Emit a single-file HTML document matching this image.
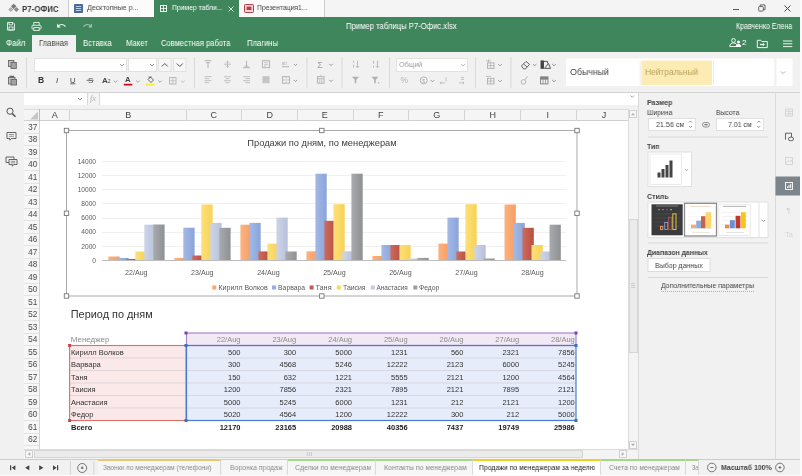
<!DOCTYPE html>
<html lang="ru"><head><meta charset="utf-8"><title>Пример таблицы Р7-Офис.xlsx</title>
<style>
*{box-sizing:border-box;margin:0;padding:0}
html,body{width:802px;height:476px;overflow:hidden;background:#f1f1f1}
body{font-family:"Liberation Sans",sans-serif;font-size:8px;color:#444;position:relative}
.a{position:absolute}
.t{position:absolute;white-space:nowrap;line-height:1;transform-origin:0 0;will-change:transform}
svg{position:absolute;overflow:visible;will-change:transform}
.w{color:#fff}
.gs{-webkit-text-stroke:0.2px #fff}
.b{font-weight:bold}
.box{position:absolute;background:#fff;border:1px solid #cfcfcf}
.sep{position:absolute;width:1px;background:#d8d8d8}
.hl{position:absolute;height:1px;background:#d8d8d8}
.ic{stroke:#b4b4b4;fill:none;stroke-width:1}
.dk{stroke:#555;fill:none;stroke-width:1}
</style></head><body>
<div class="a" style="left:0;top:0;width:802px;height:17px;background:#f4f4f4"></div><svg style="left:8px;top:3px" width="12" height="11" viewBox="0 0 12 11">
<path d="M5.700 0.700 L8.500 3.300 L5.700 5.900 L2.900 3.300Z" fill="#7a7a7a"/>
<path d="M2.800 3.900 L5.400 6.400 L2.800 8.900 L0.200 6.400Z" fill="#aeaeae"/>
<path d="M8.400 3.900 L11 6.400 L8.400 8.900 L5.800 6.400Z" fill="#8c8c8c"/>
</svg><div class="t" style="left:21.65px;top:3.66px;font-size:9.5px;color:#3a3a3a;font-weight:bold;transform:scaleX(0.835);">Р7-ОФИС</div><div class="a" style="left:68px;top:0;width:1px;height:17px;background:#cfcfcf"></div><div class="a" style="left:69px;top:0;width:85px;height:17px;background:#fbfbfb"></div><svg style="left:74px;top:4px" width="9" height="9" viewBox="0 0 9 9"><rect width="9" height="9" rx="0.8" fill="#446a9e"/>
<path d="M1.8 2.5h5.4M1.8 4.5h5.4M1.8 6.5h5.4" stroke="#cfd9ea" stroke-width="0.9"/></svg><div class="t" style="left:86.65px;top:4.46px;font-size:8px;color:#444;transform:scaleX(0.890);">Десктопные р...</div><div class="a" style="left:154px;top:0;width:85px;height:18px;background:#40865c"></div><svg style="left:160px;top:5px" width="7" height="7" viewBox="0 0 7 7"><rect x="0.5" y="0.5" width="6" height="6" fill="none" stroke="#fff" stroke-width="0.9"/>
<path d="M0.5 3.5h6M3.5 0.5v6" stroke="#fff" stroke-width="0.8"/></svg><div class="t" style="left:171.65px;top:4.46px;font-size:8px;color:#fff;transform:scaleX(0.851);">Пример табли...</div><svg style="left:228px;top:6px" width="6" height="6" viewBox="0 0 6 6"><path d="M0.5 0.5l5 5M5.5 0.5l-5 5" stroke="#e8f0ea" stroke-width="0.9"/></svg><div class="a" style="left:239px;top:0;width:85px;height:17px;background:#fbfbfb"></div><svg style="left:244px;top:4px" width="10" height="9" viewBox="0 0 10 9"><rect x="0.5" y="0.5" width="9" height="8" rx="0.8" fill="#f3d6d6" stroke="#b5404a" stroke-width="1"/>
<rect x="2.6" y="2.6" width="4.8" height="3.4" fill="#b5404a"/></svg><div class="t" style="left:257.45px;top:4.46px;font-size:8px;color:#444;transform:scaleX(0.850);">Презентация1...</div><div class="a" style="left:324px;top:0;width:1px;height:17px;background:#cfcfcf"></div><svg style="left:730px;top:0" width="72" height="17" viewBox="0 0 72 17">
<path d="M3 9.500h6" stroke="#555" stroke-width="1"/>
<rect x="28.700" y="6.500" width="4.600" height="4.600" rx="0.800" fill="none" stroke="#555" stroke-width="0.9"/><path d="M30.200 6.500v-1.600h4.800v4.800h-1.600" fill="none" stroke="#555" stroke-width="0.9"/>
<path d="M54.5 5.5l6 6M60.5 5.5l-6 6" stroke="#444" stroke-width="1"/>
</svg><div class="a" style="left:0;top:17px;width:802px;height:35px;background:#40865c"></div><svg style="left:0;top:17px" width="110" height="18" viewBox="0 0 110 18">
<g fill="none" stroke="#e9f2ec" stroke-width="0.9">
<path d="M7.5 5.5h5.5l1.5 1.5v6h-7z"/><path d="M9 5.5v2.3h3.5v-2.3"/><rect x="9" y="10" width="4" height="3"/>
<rect x="32" y="8.300" width="9" height="3.800" rx="0.8"/><path d="M33.800 8.300v-2.800h5.400v2.800"/><rect x="33.800" y="10.600" width="5.400" height="2.800" fill="#40865c"/>
</g>
<path d="M58 9.2c2-2.300 5-2.300 7.500 0.300" fill="none" stroke="#e9f2ec" stroke-width="1.1"/><path d="M57 6.600v3.800h3.800z" fill="#e9f2ec"/>
<path d="M91 9.200c-2-2.300-5-2.300-7.500 0.300" fill="none" stroke="#9fc3ad" stroke-width="1.100"/><path d="M92 6.600v3.800h-3.800z" fill="#9fc3ad"/>
</svg><div class="t" style="left:345.65px;top:21.89px;font-size:8.7px;color:#fff;transform:scaleX(0.886);">Пример таблицы Р7-Офис.xlsx</div><div class="t" style="left:736.05px;top:22.00px;font-size:8.5px;color:#fff;transform:scaleX(0.827);">Кравченко Елена</div><div class="a" style="left:32px;top:35px;width:44px;height:17px;background:#f1f1f1"></div><div class="t" style="left:5.65px;top:39.20px;font-size:8.3px;color:#fff;transform:scaleX(0.956);">Файл</div><div class="t" style="left:39.35px;top:39.20px;font-size:8.3px;color:#444;transform:scaleX(0.921);">Главная</div><div class="t" style="left:83.15px;top:39.20px;font-size:8.3px;color:#fff;transform:scaleX(0.930);">Вставка</div><div class="t" style="left:126.05px;top:39.20px;font-size:8.3px;color:#fff;transform:scaleX(0.932);">Макет</div><div class="t" style="left:160.95px;top:39.20px;font-size:8.3px;color:#fff;transform:scaleX(0.914);">Совместная работа</div><div class="t" style="left:247.05px;top:39.20px;font-size:8.3px;color:#fff;transform:scaleX(0.925);">Плагины</div><svg style="left:726px;top:36px" width="76" height="14" viewBox="0 0 76 14">
<g fill="none" stroke="#fff" stroke-width="0.9">
<circle cx="7.500" cy="4.400" r="1.900"/><path d="M3.800 10.500c0-2.600 1.500-3.500 3.700-3.500s3.700 0.900 3.700 3.500z"/>
</g>
<circle cx="12.500" cy="6" r="1.500" fill="#fff"/><path d="M9.900 10.900c0-2.200 1.100-3 2.600-3s2.600 0.800 2.600 3z" fill="#fff"/>
<g fill="none" stroke="#fff" stroke-width="0.900">
<path d="M31.300 4.300h3.500l1 1.200h5.500v6.100h-10z"/>
<path d="M57 5h9.300M57 7.800h9.300M57 10.600h9.300"/>
</g>
<path d="M34 8.500h3.400" fill="none" stroke="#fff" stroke-width="1.200"/><path d="M36.800 6.700l2 1.800l-2 1.800z" fill="#fff"/>
</svg><div class="t" style="left:741.75px;top:39.07px;font-size:7.6px;color:#fff;transform:scaleX(1.088);">2</div><div class="a" style="left:0;top:52px;width:802px;height:40px;background:#f1f1f1"></div><div class="hl" style="left:0;top:92px;width:802px;background:#d2d2d2"></div><svg style="left:0;top:52px" width="802" height="40" viewBox="0 52 802 40"><g fill="none" stroke="#666" stroke-width="0.9"><rect x="8.500" y="60.500" width="5.300" height="6" fill="#c8c8c8"/><rect x="11" y="62.500" width="5.300" height="6" fill="#a4a4a4"/></g><g fill="none" stroke="#666" stroke-width="0.9"><rect x="8.500" y="77.500" width="6.500" height="6.500" fill="#c8c8c8"/><rect x="11" y="79.500" width="5.500" height="5.500" fill="#a4a4a4"/><path d="M10 77.500v-1h3.500v1" stroke-width="1.300"/></g><path d="M26.5 57v31" stroke="#d9d9d9" stroke-width="1"/><path d="M194.5 57v31" stroke="#d9d9d9" stroke-width="1"/><path d="M307 57v31" stroke="#d9d9d9" stroke-width="1"/><path d="M342 57v31" stroke="#d9d9d9" stroke-width="1"/><path d="M389.5 57v31" stroke="#d9d9d9" stroke-width="1"/><path d="M475.5 57v31" stroke="#d9d9d9" stroke-width="1"/><path d="M511 57v31" stroke="#d9d9d9" stroke-width="1"/><rect x="34.500" y="58.500" width="92" height="13" fill="#fff" stroke="#e2e2e2"/><path d="M120.0 64.0l2.0 2.0l2.0 -2.0" fill="none" stroke="#909090" stroke-width="0.9"/><rect x="128.500" y="58.500" width="28" height="13" fill="#fff" stroke="#e2e2e2"/><path d="M150.0 64.0l2.0 2.0l2.0 -2.0" fill="none" stroke="#909090" stroke-width="0.9"/><rect x="158.500" y="58.500" width="12.500" height="13" fill="#f7f7f7" stroke="#e2e2e2"/><path d="M161.800 66.500l3 -3l3 3" fill="none" stroke="#555" stroke-width="1"/><rect x="173.500" y="58.500" width="12.500" height="13" fill="#f7f7f7" stroke="#e2e2e2"/><path d="M176.800 63.500l3 3l3 -3" fill="none" stroke="#555" stroke-width="1"/><path d="M70.300 83.800h5" stroke="#444" stroke-width="0.8"/><path d="M86.500 80.300h7" stroke="#555" stroke-width="0.8"/><path d="M113.7 80.6l1.8 1.8l1.8 -1.8" fill="none" stroke="#999" stroke-width="0.9"/><rect x="123.800" y="83.800" width="8.500" height="1.700" fill="#d0021b"/><path d="M136.2 80.6l1.8 1.8l1.8 -1.8" fill="none" stroke="#999" stroke-width="0.9"/><rect x="146" y="83.800" width="8.500" height="1.700" fill="#f3ec3a"/><g fill="none" stroke="#555" stroke-width="0.9"><path d="M148 79.500l2.500 -2.500l3 3l-2.500 2.500z"/><path d="M148.500 77h3"/></g><path d="M158.2 80.6l1.8 1.8l1.8 -1.8" fill="none" stroke="#999" stroke-width="0.9"/><g fill="none" stroke="#b4b4b4" stroke-width="0.9"><rect x="169.500" y="77.500" width="6.500" height="6.500"/><path d="M172.800 77.500v6.500M169.500 80.800h6.500" stroke-width="0.7"/></g><path d="M181.2 80.6l1.8 1.8l1.8 -1.8" fill="none" stroke="#b4b4b4" stroke-width="0.9"/><g transform="translate(0,-0.8)"><g fill="none" stroke="#b4b4b4" stroke-width="1"><path d="M204.500 61.500h7M208 63v6M206 63.500h4"/></g><g fill="none" stroke="#b4b4b4" stroke-width="1"><path d="M224 65h7M227.500 61.500v7M226 63.500l1.500 -1.500l1.500 1.500M226 66.500l1.500 1.500l1.500 -1.500" stroke-width="0.8"/></g><g fill="none" stroke="#b4b4b4" stroke-width="1"><path d="M243 68.500h7M246.500 61.500v6M244.500 67h4"/></g><g fill="none" stroke="#b4b4b4" stroke-width="1"><rect x="262.500" y="61.500" width="7" height="7"/><path d="M264 63.500h4M264 65.500h4M264 67h2" stroke-width="0.7"/></g><g fill="none" stroke="#b4b4b4" stroke-width="1"><path d="M282 67.500h7"/></g><text x="281.500" y="65.500" font-size="5" fill="#b4b4b4" font-family="Liberation Sans, sans-serif">ab</text><path d="M293.8 64.7l1.7 1.7l1.7 -1.7" fill="none" stroke="#909090" stroke-width="0.9"/><g fill="none" stroke="#b4b4b4" stroke-width="1"><path d="M204.500 77.500h7M204.500 79.500h4.500M204.500 81.500h7M204.500 83.500h4.500" stroke-width="0.8"/></g><g fill="none" stroke="#b4b4b4" stroke-width="1"><path d="M224 77.500h7M225.500 79.500h4M224 81.500h7M225.500 83.500h4" stroke-width="0.8"/></g><g fill="none" stroke="#b4b4b4" stroke-width="1"><path d="M243 77.500h7M245.500 79.500h4.500M243 81.500h7M245.500 83.500h4.500" stroke-width="0.8"/></g><rect x="262.500" y="77" width="7" height="7" fill="#c4c4c4"/><g fill="none" stroke="#b4b4b4" stroke-width="1"><rect x="282.500" y="77.500" width="7" height="6.500"/><path d="M282.500 80.800h7M286 77.500v1.500M286 82.500v1.500" stroke-width="0.700"/></g><path d="M293.8 80.7l1.7 1.7l1.7 -1.7" fill="none" stroke="#909090" stroke-width="0.9"/><text x="317.300" y="68.500" font-size="8.800" fill="#a0a0a0" font-family="Liberation Sans, sans-serif">Σ</text><path d="M329.3 64.7l1.7 1.7l1.7 -1.7" fill="none" stroke="#909090" stroke-width="0.9"/><g fill="none" stroke="#b4b4b4" stroke-width="1"><rect x="317.500" y="77.500" width="6.500" height="6.500"/><path d="M317.500 79.500h6.500M319.700 79.500v4.500M321.800 79.500v4.500M320.800 75.500v2" stroke-width="0.700"/></g><path d="M329.3 80.7l1.7 1.7l1.7 -1.7" fill="none" stroke="#909090" stroke-width="0.9"/><g fill="none" stroke="#b4b4b4" stroke-width="1"><path d="M353.500 61.500v2M353.500 65.500v3M357.500 61.500v7M356 67l1.500 1.500l1.500 -1.500" stroke-width="0.900"/></g><g fill="none" stroke="#b4b4b4" stroke-width="1"><path d="M373.500 61.500v3M373.500 66.500v2M377.500 61.500v7M376 67l1.500 1.500l1.500 -1.500" stroke-width="0.9"/></g><path d="M352 77.500h7l-2.700 3v3.500h-1.600v-3.500z" fill="#b0b0b0"/><path d="M371.500 77.500h7l-2.700 3v3.500h-1.600v-3.500z" fill="#b0b0b0"/><rect x="378" y="83" width="1.300" height="1.300" fill="#b0b0b0"/></g><rect x="396.500" y="58.500" width="71" height="13" fill="#fff" stroke="#e2e2e2"/><path d="M461.0 64.0l2.0 2.0l2.0 -2.0" fill="none" stroke="#b4b4b4" stroke-width="0.9"/><g transform="translate(0,-0.6)"><text x="400.500" y="84" font-size="8.500" fill="#b4b4b4" font-family="Liberation Sans, sans-serif">%</text><g fill="none" stroke="#b4b4b4" stroke-width="1"><circle cx="423.700" cy="81" r="3.500"/></g><text x="422" y="83.300" font-size="6" fill="#b4b4b4" font-family="Liberation Sans, sans-serif">$</text><path d="M430.8 80.7l1.7 1.7l1.7 -1.7" fill="none" stroke="#909090" stroke-width="0.9"/><g fill="none" stroke="#b4b4b4" stroke-width="1"><path d="M440 83.500h5M440 83.500l1.300 -1.300M440 83.500l1.300 1.300M446 78v4" stroke-width="0.800"/></g><g fill="none" stroke="#b4b4b4" stroke-width="1"><path d="M459 83.500h5M464 83.500l-1.300 -1.300M464 83.500l-1.300 1.300M461 78h3M461 80h3" stroke-width="0.8"/></g><g fill="none" stroke="#b4b4b4" stroke-width="1"><rect x="487.500" y="63.500" width="6.500" height="5.500"/><path d="M487.500 66.200h6.500M490.700 63.500v5.500M486 61.500h5M488.500 60v3" stroke-width="0.800"/></g><path d="M498.3 64.7l1.7 1.7l1.7 -1.7" fill="none" stroke="#909090" stroke-width="0.9"/><g fill="none" stroke="#b4b4b4" stroke-width="1"><rect x="487.500" y="79" width="6.500" height="5.500"/><path d="M487.500 81.700h6.500M490.700 79v5.500M486 77h5" stroke-width="0.800"/></g><path d="M498.3 80.7l1.7 1.7l1.7 -1.7" fill="none" stroke="#909090" stroke-width="0.9"/><g fill="none" stroke="#555" stroke-width="0.9"><path d="M521.500 66.500l4.500 -4.500l3.500 3l-4 4.500h-2z"/><path d="M523.500 64.500l3.500 3"/></g><path d="M532.9 64.6l1.8 1.8l1.8 -1.8" fill="none" stroke="#888" stroke-width="0.9"/><g stroke="#444" stroke-width="0.9"><rect x="541" y="61.500" width="2.500" height="7.500" fill="#444"/><path d="M544.500 69l4 -5l2 5z" fill="none"/><path d="M544 62h3.500v2" fill="none"/></g><path d="M552.2 64.6l1.8 1.8l1.8 -1.8" fill="none" stroke="#888" stroke-width="0.9"/><g fill="none" stroke="#b4b4b4" stroke-width="1"><circle cx="523.500" cy="82.500" r="2.300"/><path d="M525 80.500l2.500 -3.500"/></g><g fill="none" stroke="#808080" stroke-width="0.9"><rect x="540.500" y="77.500" width="7.500" height="7"/><path d="M540.500 79.800h7.500M543 79.800v4.700M545.500 79.800v4.700" stroke-width="0.700"/></g><rect x="540.500" y="77.500" width="7.500" height="2.300" fill="#808080"/><path d="M552.2 80.6l1.8 1.8l1.8 -1.8" fill="none" stroke="#888" stroke-width="0.9"/></g><rect x="566" y="58.500" width="226.500" height="27.500" fill="#fff"/><rect x="641.500" y="60.500" width="70.500" height="24.500" fill="#fcecb4"/><path d="M640.200 60.500v24.500M713.500 60.500v24.500" stroke="#ececec" stroke-width="1"/><rect x="774.300" y="58" width="2.200" height="28.500" fill="#f1f1f1"/><path d="M780.8 71.4l2.2 2.2l2.2 -2.2" fill="none" stroke="#aaa" stroke-width="0.9"/></svg><div class="t b" style="left:38.200px;top:76.300px;font-size:8.500px;color:#333">B</div><div class="t" style="left:55.500px;top:76.500px;font-size:8px;color:#444;font-style:italic">I</div><div class="t" style="left:70.300px;top:76.500px;font-size:7.500px;color:#444">U</div><div class="t" style="left:87.500px;top:76.500px;font-size:8px;color:#555">S</div><div class="t b" style="left:102px;top:76.500px;font-size:8px;color:#444">A<span style="font-size:5px;font-weight:normal">2</span></div><div class="t b" style="left:125.300px;top:76px;font-size:7.800px;color:#444">A</div><div class="t" style="left:399.15px;top:60.96px;font-size:8px;color:#9c9c9c;transform:scaleX(0.881);">Общий</div><div class="t" style="left:569.95px;top:67.73px;font-size:9px;color:#444;transform:scaleX(0.978);">Обычный</div><div class="t" style="left:644.65px;top:67.73px;font-size:9px;color:#b9a25f;transform:scaleX(0.932);">Нейтральный</div><div class="a" style="left:24px;top:93px;width:613.500px;height:12.500px;background:#fff"></div><div class="a" style="left:86.500px;top:93px;width:13px;height:12px;background:#f4f4f4;border-left:1px solid #d8d8d8;border-right:1px solid #d8d8d8"></div><div class="t" style="left:89.500px;top:94.500px;font-size:8px;color:#b0b0b0;font-style:italic;font-family:'Liberation Serif',serif">fx</div><svg style="left:76px;top:96px" width="8" height="6" viewBox="0 0 8 6"><path d="M2 2l2 2l2 -2" fill="none" stroke="#888" stroke-width="0.9"/></svg><svg style="left:628px;top:94px" width="8" height="6" viewBox="0 0 8 6"><path d="M2.500 1.500l1.800 1.800l1.800 -1.800" fill="none" stroke="#999" stroke-width="0.9"/></svg><div class="hl" style="left:24px;top:105.500px;width:613.500px;background:#dcdcdc"></div><svg style="left:0;top:93px" width="24" height="80" viewBox="0 93 24 80">
<g fill="none" stroke="#555" stroke-width="1">
<circle cx="10" cy="111.200" r="3.100"/><path d="M12.300 113.600l3.200 3.200" stroke-width="1.500"/>
<path d="M7 132.500h9v6h-4.500l-1.600 1.700v-1.700h-2.900z" stroke-width="0.900"/><path d="M9 134.500h5M9 136.300h5" stroke-width="0.600"/>
<path d="M6 157h8v5.500h-8z" stroke-width="0.900"/><path d="M9 159.500h8v5h-3l-1.600 1.600v-1.600h-3.400z" fill="#f1f1f1" stroke-width="0.900"/><path d="M10.800 161.300h4.400M10.800 162.800h4.400" stroke-width="0.600"/>
</g></svg><div class="a" style="left:24px;top:105px;width:613.500px;height:354px;background:#f1f1f1"></div><div class="a" style="left:40px;top:120.500px;width:588px;height:328.500px;background:#fff;overflow:hidden" id="grid"></div><div class="a" style="left:24px;top:108.500px;width:604px;height:12px;background:#f5f5f5;border-top:1px solid #dcdcdc;border-bottom:1px solid #cfcfcf"></div><svg style="left:24px;top:108.500px" width="16" height="12" viewBox="0 0 16 12"><path d="M14 2.500v8h-8z" fill="#c6c6c6"/><path d="M15.500 0v12" stroke="#b8c0a8" stroke-width="1"/></svg><div class="t" style="left:40.0px;top:110.500px;width:29.6px;text-align:center;font-size:9px;color:#444">A</div><div class="a" style="left:69.1px;top:109.500px;width:1px;height:11px;background:#d5d5d5"></div><div class="t" style="left:69.6px;top:110.500px;width:116.4px;text-align:center;font-size:9px;color:#444">B</div><div class="a" style="left:185.5px;top:109.500px;width:1px;height:11px;background:#d5d5d5"></div><div class="t" style="left:186.0px;top:110.500px;width:55.7px;text-align:center;font-size:9px;color:#444">C</div><div class="a" style="left:241.2px;top:109.500px;width:1px;height:11px;background:#d5d5d5"></div><div class="t" style="left:241.7px;top:110.500px;width:55.7px;text-align:center;font-size:9px;color:#444">D</div><div class="a" style="left:296.9px;top:109.500px;width:1px;height:11px;background:#d5d5d5"></div><div class="t" style="left:297.4px;top:110.500px;width:55.7px;text-align:center;font-size:9px;color:#444">E</div><div class="a" style="left:352.7px;top:109.500px;width:1px;height:11px;background:#d5d5d5"></div><div class="t" style="left:353.2px;top:110.500px;width:55.7px;text-align:center;font-size:9px;color:#444">F</div><div class="a" style="left:408.4px;top:109.500px;width:1px;height:11px;background:#d5d5d5"></div><div class="t" style="left:408.9px;top:110.500px;width:55.7px;text-align:center;font-size:9px;color:#444">G</div><div class="a" style="left:464.1px;top:109.500px;width:1px;height:11px;background:#d5d5d5"></div><div class="t" style="left:464.6px;top:110.500px;width:55.7px;text-align:center;font-size:9px;color:#444">H</div><div class="a" style="left:519.8px;top:109.500px;width:1px;height:11px;background:#d5d5d5"></div><div class="t" style="left:520.3px;top:110.500px;width:55.7px;text-align:center;font-size:9px;color:#444">I</div><div class="a" style="left:575.5px;top:109.500px;width:1px;height:11px;background:#d5d5d5"></div><div class="t" style="left:576.0px;top:110.500px;width:56.0px;text-align:center;font-size:9px;color:#444">J</div><div class="a" style="left:24px;top:120.500px;width:16px;height:328.500px;background:#f7f7f7;border-right:1px solid #d4d4d4;overflow:hidden"><div class="t" style="left:0.500px;top:2.4px;width:15.500px;text-align:center;font-size:8.500px;color:#444;transform:scaleX(.95);transform-origin:50% 0">37</div><div class="a" style="left:0;top:12.0px;width:16px;height:1px;background:#e3e3e3"></div><div class="t" style="left:0.500px;top:14.9px;width:15.500px;text-align:center;font-size:8.500px;color:#444;transform:scaleX(.95);transform-origin:50% 0">38</div><div class="a" style="left:0;top:24.5px;width:16px;height:1px;background:#e3e3e3"></div><div class="t" style="left:0.500px;top:27.4px;width:15.500px;text-align:center;font-size:8.500px;color:#444;transform:scaleX(.95);transform-origin:50% 0">39</div><div class="a" style="left:0;top:37.0px;width:16px;height:1px;background:#e3e3e3"></div><div class="t" style="left:0.500px;top:39.9px;width:15.500px;text-align:center;font-size:8.500px;color:#444;transform:scaleX(.95);transform-origin:50% 0">40</div><div class="a" style="left:0;top:49.5px;width:16px;height:1px;background:#e3e3e3"></div><div class="t" style="left:0.500px;top:52.4px;width:15.500px;text-align:center;font-size:8.500px;color:#444;transform:scaleX(.95);transform-origin:50% 0">41</div><div class="a" style="left:0;top:62.0px;width:16px;height:1px;background:#e3e3e3"></div><div class="t" style="left:0.500px;top:64.9px;width:15.500px;text-align:center;font-size:8.500px;color:#444;transform:scaleX(.95);transform-origin:50% 0">42</div><div class="a" style="left:0;top:74.5px;width:16px;height:1px;background:#e3e3e3"></div><div class="t" style="left:0.500px;top:77.4px;width:15.500px;text-align:center;font-size:8.500px;color:#444;transform:scaleX(.95);transform-origin:50% 0">43</div><div class="a" style="left:0;top:87.0px;width:16px;height:1px;background:#e3e3e3"></div><div class="t" style="left:0.500px;top:89.9px;width:15.500px;text-align:center;font-size:8.500px;color:#444;transform:scaleX(.95);transform-origin:50% 0">44</div><div class="a" style="left:0;top:99.5px;width:16px;height:1px;background:#e3e3e3"></div><div class="t" style="left:0.500px;top:102.4px;width:15.500px;text-align:center;font-size:8.500px;color:#444;transform:scaleX(.95);transform-origin:50% 0">45</div><div class="a" style="left:0;top:112.0px;width:16px;height:1px;background:#e3e3e3"></div><div class="t" style="left:0.500px;top:114.9px;width:15.500px;text-align:center;font-size:8.500px;color:#444;transform:scaleX(.95);transform-origin:50% 0">46</div><div class="a" style="left:0;top:124.5px;width:16px;height:1px;background:#e3e3e3"></div><div class="t" style="left:0.500px;top:127.4px;width:15.500px;text-align:center;font-size:8.500px;color:#444;transform:scaleX(.95);transform-origin:50% 0">47</div><div class="a" style="left:0;top:137.0px;width:16px;height:1px;background:#e3e3e3"></div><div class="t" style="left:0.500px;top:139.9px;width:15.500px;text-align:center;font-size:8.500px;color:#444;transform:scaleX(.95);transform-origin:50% 0">48</div><div class="a" style="left:0;top:149.5px;width:16px;height:1px;background:#e3e3e3"></div><div class="t" style="left:0.500px;top:152.4px;width:15.500px;text-align:center;font-size:8.500px;color:#444;transform:scaleX(.95);transform-origin:50% 0">49</div><div class="a" style="left:0;top:162.0px;width:16px;height:1px;background:#e3e3e3"></div><div class="t" style="left:0.500px;top:164.9px;width:15.500px;text-align:center;font-size:8.500px;color:#444;transform:scaleX(.95);transform-origin:50% 0">50</div><div class="a" style="left:0;top:174.5px;width:16px;height:1px;background:#e3e3e3"></div><div class="t" style="left:0.500px;top:177.4px;width:15.500px;text-align:center;font-size:8.500px;color:#444;transform:scaleX(.95);transform-origin:50% 0">51</div><div class="a" style="left:0;top:187.0px;width:16px;height:1px;background:#e3e3e3"></div><div class="t" style="left:0.500px;top:189.9px;width:15.500px;text-align:center;font-size:8.500px;color:#444;transform:scaleX(.95);transform-origin:50% 0">52</div><div class="a" style="left:0;top:199.5px;width:16px;height:1px;background:#e3e3e3"></div><div class="t" style="left:0.500px;top:202.4px;width:15.500px;text-align:center;font-size:8.500px;color:#444;transform:scaleX(.95);transform-origin:50% 0">53</div><div class="a" style="left:0;top:212.0px;width:16px;height:1px;background:#e3e3e3"></div><div class="t" style="left:0.500px;top:214.9px;width:15.500px;text-align:center;font-size:8.500px;color:#444;transform:scaleX(.95);transform-origin:50% 0">54</div><div class="a" style="left:0;top:224.5px;width:16px;height:1px;background:#e3e3e3"></div><div class="t" style="left:0.500px;top:227.4px;width:15.500px;text-align:center;font-size:8.500px;color:#444;transform:scaleX(.95);transform-origin:50% 0">55</div><div class="a" style="left:0;top:237.0px;width:16px;height:1px;background:#e3e3e3"></div><div class="t" style="left:0.500px;top:239.9px;width:15.500px;text-align:center;font-size:8.500px;color:#444;transform:scaleX(.95);transform-origin:50% 0">56</div><div class="a" style="left:0;top:249.5px;width:16px;height:1px;background:#e3e3e3"></div><div class="t" style="left:0.500px;top:252.4px;width:15.500px;text-align:center;font-size:8.500px;color:#444;transform:scaleX(.95);transform-origin:50% 0">57</div><div class="a" style="left:0;top:262.0px;width:16px;height:1px;background:#e3e3e3"></div><div class="t" style="left:0.500px;top:264.9px;width:15.500px;text-align:center;font-size:8.500px;color:#444;transform:scaleX(.95);transform-origin:50% 0">58</div><div class="a" style="left:0;top:274.5px;width:16px;height:1px;background:#e3e3e3"></div><div class="t" style="left:0.500px;top:277.4px;width:15.500px;text-align:center;font-size:8.500px;color:#444;transform:scaleX(.95);transform-origin:50% 0">59</div><div class="a" style="left:0;top:287.0px;width:16px;height:1px;background:#e3e3e3"></div><div class="t" style="left:0.500px;top:289.9px;width:15.500px;text-align:center;font-size:8.500px;color:#444;transform:scaleX(.95);transform-origin:50% 0">60</div><div class="a" style="left:0;top:299.5px;width:16px;height:1px;background:#e3e3e3"></div><div class="t" style="left:0.500px;top:302.4px;width:15.500px;text-align:center;font-size:8.500px;color:#444;transform:scaleX(.95);transform-origin:50% 0">61</div><div class="a" style="left:0;top:312.0px;width:16px;height:1px;background:#e3e3e3"></div><div class="t" style="left:0.500px;top:314.9px;width:15.500px;text-align:center;font-size:8.500px;color:#444;transform:scaleX(.95);transform-origin:50% 0">62</div><div class="a" style="left:0;top:324.5px;width:16px;height:1px;background:#e3e3e3"></div><div class="t" style="left:0.500px;top:327.4px;width:15.500px;text-align:center;font-size:8.500px;color:#444;transform:scaleX(.95);transform-origin:50% 0">63</div><div class="a" style="left:0;top:337.0px;width:16px;height:1px;background:#e3e3e3"></div></div><svg style="left:0;top:0" width="802" height="476" viewBox="0 0 802 476" font-family="Liberation Sans, sans-serif"><defs>
<linearGradient id="g0" x1="0" x2="1" y1="0" y2="0"><stop offset="0" stop-color="#fbb381"/><stop offset="1" stop-color="#f79d63"/></linearGradient>
<linearGradient id="g1" x1="0" x2="1" y1="0" y2="0"><stop offset="0" stop-color="#a3b9e6"/><stop offset="1" stop-color="#8aa4da"/></linearGradient>
<linearGradient id="g2" x1="0" x2="1" y1="0" y2="0"><stop offset="0" stop-color="#cf6b5c"/><stop offset="1" stop-color="#b84d41"/></linearGradient>
<linearGradient id="g3" x1="0" x2="1" y1="0" y2="0"><stop offset="0" stop-color="#fde07a"/><stop offset="1" stop-color="#f8d254"/></linearGradient>
<linearGradient id="g4" x1="0" x2="1" y1="0" y2="0"><stop offset="0" stop-color="#cdd5e8"/><stop offset="1" stop-color="#b7c1da"/></linearGradient>
<linearGradient id="g5" x1="0" x2="1" y1="0" y2="0"><stop offset="0" stop-color="#a9aaae"/><stop offset="1" stop-color="#8f9094"/></linearGradient>
</defs><rect x="66.5" y="130.5" width="510.5" height="165.5" fill="#fff" stroke="#a8a8a8" stroke-width="1"/><text x="322" y="145.800" text-anchor="middle" font-size="9.300" fill="#404040">Продажи по дням, по менеджерам</text><path d="M102.0 260.5H566.0" stroke="#bdbdbd" stroke-width="1"/><text x="96" y="262.6" text-anchor="end" font-size="6.600" fill="#595959">0</text><path d="M102.0 246.5H566.0" stroke="#f0f0f0" stroke-width="1"/><text x="96" y="248.5" text-anchor="end" font-size="6.600" fill="#595959">2000</text><path d="M102.0 232.5H566.0" stroke="#f0f0f0" stroke-width="1"/><text x="96" y="234.3" text-anchor="end" font-size="6.600" fill="#595959">4000</text><path d="M102.0 218.5H566.0" stroke="#f0f0f0" stroke-width="1"/><text x="96" y="220.2" text-anchor="end" font-size="6.600" fill="#595959">6000</text><path d="M102.0 203.5H566.0" stroke="#f0f0f0" stroke-width="1"/><text x="96" y="206.1" text-anchor="end" font-size="6.600" fill="#595959">8000</text><path d="M102.0 189.5H566.0" stroke="#f0f0f0" stroke-width="1"/><text x="96" y="191.9" text-anchor="end" font-size="6.600" fill="#595959">10000</text><path d="M102.0 175.5H566.0" stroke="#f0f0f0" stroke-width="1"/><text x="96" y="177.8" text-anchor="end" font-size="6.600" fill="#595959">12000</text><path d="M102.0 161.5H566.0" stroke="#f0f0f0" stroke-width="1"/><text x="96" y="163.7" text-anchor="end" font-size="6.600" fill="#595959">14000</text><rect x="108.3" y="256.5" width="11.3" height="3.5" fill="url(#g0)"/><rect x="117.3" y="257.9" width="11.3" height="2.1" fill="url(#g1)"/><rect x="126.3" y="258.9" width="11.3" height="1.1" fill="url(#g2)"/><rect x="135.3" y="251.5" width="11.3" height="8.5" fill="url(#g3)"/><rect x="144.3" y="224.7" width="11.3" height="35.3" fill="url(#g4)"/><rect x="153.3" y="224.5" width="11.3" height="35.5" fill="url(#g5)"/><text x="136.3" y="275.200" text-anchor="middle" font-size="7.100" fill="#595959">22/Aug</text><rect x="174.3" y="257.9" width="11.3" height="2.1" fill="url(#g0)"/><rect x="183.3" y="227.7" width="11.3" height="32.3" fill="url(#g1)"/><rect x="192.3" y="255.5" width="11.3" height="4.5" fill="url(#g2)"/><rect x="201.3" y="204.5" width="11.3" height="55.5" fill="url(#g3)"/><rect x="210.3" y="222.9" width="11.3" height="37.1" fill="url(#g4)"/><rect x="219.3" y="227.8" width="11.3" height="32.2" fill="url(#g5)"/><text x="202.3" y="275.200" text-anchor="middle" font-size="7.100" fill="#595959">23/Aug</text><rect x="240.4" y="224.7" width="11.3" height="35.3" fill="url(#g0)"/><rect x="249.4" y="222.9" width="11.3" height="37.1" fill="url(#g1)"/><rect x="258.4" y="251.4" width="11.3" height="8.6" fill="url(#g2)"/><rect x="267.4" y="243.6" width="11.3" height="16.4" fill="url(#g3)"/><rect x="276.4" y="217.6" width="11.3" height="42.4" fill="url(#g4)"/><rect x="285.4" y="251.5" width="11.3" height="8.5" fill="url(#g5)"/><text x="268.4" y="275.200" text-anchor="middle" font-size="7.100" fill="#595959">24/Aug</text><rect x="306.4" y="251.3" width="11.3" height="8.7" fill="url(#g0)"/><rect x="315.4" y="173.7" width="11.3" height="86.3" fill="url(#g1)"/><rect x="324.4" y="220.8" width="11.3" height="39.2" fill="url(#g2)"/><rect x="333.4" y="204.2" width="11.3" height="55.8" fill="url(#g3)"/><rect x="342.4" y="251.3" width="11.3" height="8.7" fill="url(#g4)"/><rect x="351.4" y="173.7" width="11.3" height="86.3" fill="url(#g5)"/><text x="334.4" y="275.200" text-anchor="middle" font-size="7.100" fill="#595959">25/Aug</text><rect x="372.4" y="256.0" width="11.3" height="4.0" fill="url(#g0)"/><rect x="381.4" y="245.0" width="11.3" height="15.0" fill="url(#g1)"/><rect x="390.4" y="245.0" width="11.3" height="15.0" fill="url(#g2)"/><rect x="399.4" y="245.0" width="11.3" height="15.0" fill="url(#g3)"/><rect x="408.4" y="258.5" width="11.3" height="1.5" fill="url(#g4)"/><rect x="417.4" y="257.9" width="11.3" height="2.1" fill="url(#g5)"/><text x="400.4" y="275.200" text-anchor="middle" font-size="7.100" fill="#595959">26/Aug</text><rect x="438.4" y="243.6" width="11.3" height="16.4" fill="url(#g0)"/><rect x="447.4" y="217.6" width="11.3" height="42.4" fill="url(#g1)"/><rect x="456.4" y="251.5" width="11.3" height="8.5" fill="url(#g2)"/><rect x="465.4" y="204.2" width="11.3" height="55.8" fill="url(#g3)"/><rect x="474.4" y="245.0" width="11.3" height="15.0" fill="url(#g4)"/><rect x="483.4" y="258.5" width="11.3" height="1.5" fill="url(#g5)"/><text x="466.5" y="275.200" text-anchor="middle" font-size="7.100" fill="#595959">27/Aug</text><rect x="504.5" y="204.5" width="11.3" height="55.5" fill="url(#g0)"/><rect x="513.5" y="222.9" width="11.3" height="37.1" fill="url(#g1)"/><rect x="522.5" y="227.8" width="11.3" height="32.2" fill="url(#g2)"/><rect x="531.5" y="245.0" width="11.3" height="15.0" fill="url(#g3)"/><rect x="540.5" y="251.5" width="11.3" height="8.5" fill="url(#g4)"/><rect x="549.5" y="224.7" width="11.3" height="35.3" fill="url(#g5)"/><text x="532.5" y="275.200" text-anchor="middle" font-size="7.100" fill="#595959">28/Aug</text><path d="M102.0 260.500H566.0" stroke="#bdbdbd" stroke-width="1"/><rect x="212.3" y="285.500" width="4" height="4" fill="#f9a870"/><text x="218.5" y="290" font-size="7.300" fill="#595959" textLength="49.2" lengthAdjust="spacingAndGlyphs">Кирилл Волков</text><rect x="272.0" y="285.500" width="4" height="4" fill="#94aee0"/><text x="278.1" y="290" font-size="7.300" fill="#595959" textLength="26.9" lengthAdjust="spacingAndGlyphs">Варвара</text><rect x="309.6" y="285.500" width="4" height="4" fill="#c25a4e"/><text x="315.4" y="290" font-size="7.300" fill="#595959" textLength="16.2" lengthAdjust="spacingAndGlyphs">Таня</text><rect x="336.8" y="285.500" width="4" height="4" fill="#fad85f"/><text x="343.0" y="290" font-size="7.300" fill="#595959" textLength="22.6" lengthAdjust="spacingAndGlyphs">Таисия</text><rect x="370.8" y="285.500" width="4" height="4" fill="#c2cbe1"/><text x="376.4" y="290" font-size="7.300" fill="#595959" textLength="31.4" lengthAdjust="spacingAndGlyphs">Анастасия</text><rect x="413.3" y="285.500" width="4" height="4" fill="#9b9ca0"/><text x="419.1" y="290" font-size="7.300" fill="#595959" textLength="20.1" lengthAdjust="spacingAndGlyphs">Федор</text><rect x="64.3" y="128.3" width="4.400" height="4.400" fill="#fff" stroke="#777" stroke-width="0.9"/><rect x="319.6" y="128.3" width="4.400" height="4.400" fill="#fff" stroke="#777" stroke-width="0.9"/><rect x="574.8" y="128.3" width="4.400" height="4.400" fill="#fff" stroke="#777" stroke-width="0.9"/><rect x="64.3" y="211.1" width="4.400" height="4.400" fill="#fff" stroke="#777" stroke-width="0.9"/><rect x="574.8" y="211.1" width="4.400" height="4.400" fill="#fff" stroke="#777" stroke-width="0.9"/><rect x="64.3" y="293.8" width="4.400" height="4.400" fill="#fff" stroke="#777" stroke-width="0.9"/><rect x="319.6" y="293.8" width="4.400" height="4.400" fill="#fff" stroke="#777" stroke-width="0.9"/><rect x="574.8" y="293.8" width="4.400" height="4.400" fill="#fff" stroke="#777" stroke-width="0.9"/><rect x="186.0" y="333.0" width="390.0" height="12.5" fill="#f1e9f5"/><rect x="69.6" y="345.5" width="116.4" height="75.0" fill="#fbe8e8"/><rect x="186.0" y="345.5" width="390.0" height="75.0" fill="#e6ecfa"/><path d="M69.6 358.0H576.0" stroke="#d3cfd6" stroke-width="0.700"/><path d="M69.6 370.5H576.0" stroke="#d3cfd6" stroke-width="0.700"/><path d="M69.6 383.0H576.0" stroke="#d3cfd6" stroke-width="0.700"/><path d="M69.6 395.5H576.0" stroke="#d3cfd6" stroke-width="0.700"/><path d="M69.6 408.0H576.0" stroke="#d3cfd6" stroke-width="0.700"/><path d="M69.6 420.5H576.0" stroke="#d3cfd6" stroke-width="0.700"/><rect x="186.5" y="333.0" width="389.5" height="12.5" fill="none" stroke="#a987c8" stroke-width="1.200"/><rect x="69.6" y="345.5" width="116.4" height="75.0" fill="none" stroke="#d87070" stroke-width="1.100"/><rect x="186.5" y="345.5" width="389.5" height="75.0" fill="none" stroke="#4a7ccc" stroke-width="1.200"/><rect x="184.5" y="331.5" width="3" height="3" fill="#7744aa"/><rect x="574.5" y="331.5" width="3" height="3" fill="#7744aa"/><rect x="68.1" y="344.0" width="3" height="3" fill="#cc4444"/><rect x="184.5" y="344.0" width="3" height="3" fill="#3a6cc0"/><rect x="574.5" y="344.0" width="3" height="3" fill="#3a6cc0"/><rect x="68.1" y="419.0" width="3" height="3" fill="#cc4444"/><rect x="184.5" y="419.0" width="3" height="3" fill="#3a6cc0"/><rect x="574.5" y="419.0" width="3" height="3" fill="#3a6cc0"/><text x="70.800" y="318" font-size="10.900" fill="#333">Период по дням</text><text x="70.700" y="342.1" font-size="7.500" fill="#8c8c8c" textLength="38.800" lengthAdjust="spacingAndGlyphs">Менеджер</text><text x="240.5" y="342.1" text-anchor="end" font-size="7.500" fill="#8c8c8c">22/Aug</text><text x="296.2" y="342.1" text-anchor="end" font-size="7.500" fill="#8c8c8c">23/Aug</text><text x="352.0" y="342.1" text-anchor="end" font-size="7.500" fill="#8c8c8c">24/Aug</text><text x="407.7" y="342.1" text-anchor="end" font-size="7.500" fill="#8c8c8c">25/Aug</text><text x="463.4" y="342.1" text-anchor="end" font-size="7.500" fill="#8c8c8c">26/Aug</text><text x="519.1" y="342.1" text-anchor="end" font-size="7.500" fill="#8c8c8c">27/Aug</text><text x="574.8" y="342.1" text-anchor="end" font-size="7.500" fill="#8c8c8c">28/Aug</text><text x="71" y="354.5" font-size="7.500" fill="#333">Кирилл Волков</text><text x="240.5" y="354.5" text-anchor="end" font-size="7.500" fill="#333">500</text><text x="296.2" y="354.5" text-anchor="end" font-size="7.500" fill="#333">300</text><text x="352.0" y="354.5" text-anchor="end" font-size="7.500" fill="#333">5000</text><text x="407.7" y="354.5" text-anchor="end" font-size="7.500" fill="#333">1231</text><text x="463.4" y="354.5" text-anchor="end" font-size="7.500" fill="#333">560</text><text x="519.1" y="354.5" text-anchor="end" font-size="7.500" fill="#333">2321</text><text x="574.8" y="354.5" text-anchor="end" font-size="7.500" fill="#333">7856</text><text x="71" y="367.0" font-size="7.500" fill="#333">Варвара</text><text x="240.5" y="367.0" text-anchor="end" font-size="7.500" fill="#333">300</text><text x="296.2" y="367.0" text-anchor="end" font-size="7.500" fill="#333">4568</text><text x="352.0" y="367.0" text-anchor="end" font-size="7.500" fill="#333">5246</text><text x="407.7" y="367.0" text-anchor="end" font-size="7.500" fill="#333">12222</text><text x="463.4" y="367.0" text-anchor="end" font-size="7.500" fill="#333">2123</text><text x="519.1" y="367.0" text-anchor="end" font-size="7.500" fill="#333">6000</text><text x="574.8" y="367.0" text-anchor="end" font-size="7.500" fill="#333">5245</text><text x="71" y="379.5" font-size="7.500" fill="#333">Таня</text><text x="240.5" y="379.5" text-anchor="end" font-size="7.500" fill="#333">150</text><text x="296.2" y="379.5" text-anchor="end" font-size="7.500" fill="#333">632</text><text x="352.0" y="379.5" text-anchor="end" font-size="7.500" fill="#333">1221</text><text x="407.7" y="379.5" text-anchor="end" font-size="7.500" fill="#333">5555</text><text x="463.4" y="379.5" text-anchor="end" font-size="7.500" fill="#333">2121</text><text x="519.1" y="379.5" text-anchor="end" font-size="7.500" fill="#333">1200</text><text x="574.8" y="379.5" text-anchor="end" font-size="7.500" fill="#333">4564</text><text x="71" y="392.0" font-size="7.500" fill="#333">Таисия</text><text x="240.5" y="392.0" text-anchor="end" font-size="7.500" fill="#333">1200</text><text x="296.2" y="392.0" text-anchor="end" font-size="7.500" fill="#333">7856</text><text x="352.0" y="392.0" text-anchor="end" font-size="7.500" fill="#333">2321</text><text x="407.7" y="392.0" text-anchor="end" font-size="7.500" fill="#333">7895</text><text x="463.4" y="392.0" text-anchor="end" font-size="7.500" fill="#333">2121</text><text x="519.1" y="392.0" text-anchor="end" font-size="7.500" fill="#333">7895</text><text x="574.8" y="392.0" text-anchor="end" font-size="7.500" fill="#333">2121</text><text x="71" y="404.5" font-size="7.500" fill="#333">Анастасия</text><text x="240.5" y="404.5" text-anchor="end" font-size="7.500" fill="#333">5000</text><text x="296.2" y="404.5" text-anchor="end" font-size="7.500" fill="#333">5245</text><text x="352.0" y="404.5" text-anchor="end" font-size="7.500" fill="#333">6000</text><text x="407.7" y="404.5" text-anchor="end" font-size="7.500" fill="#333">1231</text><text x="463.4" y="404.5" text-anchor="end" font-size="7.500" fill="#333">212</text><text x="519.1" y="404.5" text-anchor="end" font-size="7.500" fill="#333">2121</text><text x="574.8" y="404.5" text-anchor="end" font-size="7.500" fill="#333">1200</text><text x="71" y="417.0" font-size="7.500" fill="#333">Федор</text><text x="240.5" y="417.0" text-anchor="end" font-size="7.500" fill="#333">5020</text><text x="296.2" y="417.0" text-anchor="end" font-size="7.500" fill="#333">4564</text><text x="352.0" y="417.0" text-anchor="end" font-size="7.500" fill="#333">1200</text><text x="407.7" y="417.0" text-anchor="end" font-size="7.500" fill="#333">12222</text><text x="463.4" y="417.0" text-anchor="end" font-size="7.500" fill="#333">300</text><text x="519.1" y="417.0" text-anchor="end" font-size="7.500" fill="#333">212</text><text x="574.8" y="417.0" text-anchor="end" font-size="7.500" fill="#333">5000</text><text x="71" y="429.5" font-size="7.500" font-weight="bold" fill="#222">Всего</text><text x="240.5" y="429.5" text-anchor="end" font-size="7.500" font-weight="bold" fill="#222">12170</text><text x="296.2" y="429.5" text-anchor="end" font-size="7.500" font-weight="bold" fill="#222">23165</text><text x="352.0" y="429.5" text-anchor="end" font-size="7.500" font-weight="bold" fill="#222">20988</text><text x="407.7" y="429.5" text-anchor="end" font-size="7.500" font-weight="bold" fill="#222">40356</text><text x="463.4" y="429.5" text-anchor="end" font-size="7.500" font-weight="bold" fill="#222">7437</text><text x="519.1" y="429.5" text-anchor="end" font-size="7.500" font-weight="bold" fill="#222">19749</text><text x="574.8" y="429.5" text-anchor="end" font-size="7.500" font-weight="bold" fill="#222">25986</text></svg><div class="a" style="left:628px;top:108.500px;width:9.500px;height:340.500px;background:#f4f4f4;border-left:1px solid #dcdcdc"></div><div class="a" style="left:629px;top:109.500px;width:8px;height:8px;background:#f7f7f7;border:1px solid #d0d0d0"></div><svg style="left:629px;top:109.500px" width="8" height="8" viewBox="0 0 8 8"><path d="M2 5.300l2 -2.300l2 2.300z" fill="#aaa"/></svg><div class="a" style="left:628.500px;top:219px;width:9px;height:134px;background:#ebebeb;border:1px solid #d6d6d6"></div><svg style="left:629px;top:282px" width="8" height="8" viewBox="0 0 8 8"><path d="M2 1.500h4M2 3.500h4M2 5.500h4" stroke="#c4c4c4" stroke-width="0.800"/></svg><div class="a" style="left:629px;top:440.500px;width:8px;height:8px;background:#f7f7f7;border:1px solid #d0d0d0"></div><svg style="left:629px;top:440.500px" width="8" height="8" viewBox="0 0 8 8"><path d="M2 2.800l2 2.300l2 -2.300z" fill="#aaa"/></svg><div class="a" style="left:24px;top:449px;width:613.500px;height:10px;background:#f4f4f4;border-top:1px solid #dcdcdc"></div><div class="a" style="left:25px;top:450px;width:8px;height:8px;background:#f7f7f7;border:1px solid #d0d0d0"></div><svg style="left:25px;top:450px" width="8" height="8" viewBox="0 0 8 8"><path d="M5.200 2l-2.300 2l2.300 2z" fill="#aaa"/></svg><div class="a" style="left:34px;top:450px;width:549px;height:8px;background:#ebebeb;border:1px solid #d6d6d6"></div><svg style="left:306px;top:450px" width="8" height="8" viewBox="0 0 8 8"><path d="M1.500 2v4M3.500 2v4M5.500 2v4" stroke="#c4c4c4" stroke-width="0.800"/></svg><div class="a" style="left:619px;top:450px;width:8px;height:8px;background:#f7f7f7;border:1px solid #d0d0d0"></div><svg style="left:619px;top:450px" width="8" height="8" viewBox="0 0 8 8"><path d="M2.800 2l2.300 2l-2.300 2z" fill="#aaa"/></svg><div class="a" style="left:637.500px;top:93px;width:138.500px;height:366px;background:#f1f1f1;border-left:1px solid #d9d9d9"></div><div class="a" style="left:774.500px;top:93px;width:27.500px;height:366px;background:#f1f1f1;border-left:1px solid #d9d9d9"></div><div class="t" style="left:646.95px;top:98.67px;font-size:7.8px;color:#444;font-weight:bold;transform:scaleX(0.904);">Размер</div><div class="t" style="left:646.95px;top:109.07px;font-size:7.8px;color:#444;transform:scaleX(0.881);">Ширина</div><div class="t" style="left:715.55px;top:109.07px;font-size:7.8px;color:#444;transform:scaleX(0.870);">Высота</div><div class="box" style="left:648px;top:118px;width:47.500px;height:12.500px;border-color:#e0e0e0"></div><div class="t" style="left:655.55px;top:120.97px;font-size:7.8px;color:#444;transform:scaleX(0.918);">21.56 см</div><div class="box" style="left:715.500px;top:118px;width:48px;height:12.500px;border-color:#e0e0e0"></div><div class="t" style="left:727.85px;top:120.97px;font-size:7.8px;color:#444;transform:scaleX(0.891);">7.01 см</div><svg style="left:637px;top:93px" width="165" height="366" viewBox="637 93 165 366">
<g fill="none" stroke="#777" stroke-width="0.800">
<path d="M689 122.500l1.500 -1.500l1.500 1.500M689 126l1.500 1.500l1.500 -1.500"/>
<path d="M757.300 122.500l1.500 -1.500l1.500 1.500M757.300 126l1.500 1.500l1.500 -1.500"/>
<rect x="702.500" y="122.500" width="7" height="4.500" rx="2.200"/>
</g>
<path d="M704.500 124.700h3" stroke="#555" stroke-width="1.100"/>
<path d="M648 137h120M648 243h120M648 277.500h120" stroke="#d8d8d8" stroke-width="1"/>
<rect x="648" y="152" width="43.500" height="34.500" fill="#fff" stroke="#e0e0e0"/>
<rect x="650" y="154" width="31.500" height="30.500" fill="#fff" stroke="#e6e6e6" stroke-width="0.800"/>
<g fill="#444"><rect x="657.500" y="172.500" width="3" height="5"/><rect x="661.500" y="169" width="3" height="8.500"/><rect x="665.500" y="165" width="3" height="12.500"/><rect x="669.500" y="160.500" width="3" height="17"/></g>
<path d="M684.800 169l1.700 1.700l1.700 -1.700" fill="none" stroke="#999" stroke-width="0.800"/>
<rect x="648" y="202" width="120" height="35.500" fill="#fff" stroke="#e0e0e0"/>
<path d="M759 202v35.500" stroke="#e2e2e2"/>
<path d="M761.800 219.800l1.700 1.700l1.700 -1.700" fill="none" stroke="#777" stroke-width="0.800"/>
<!-- thumb 1 dark -->
<rect x="651.500" y="204.300" width="31.200" height="31" fill="#3b3b3d"/>
<path d="M656 206h22" stroke="#8a8a8a" stroke-width="0.800"/>
<path d="M658 209.700h2" stroke="#f0a060" stroke-width="0.800"/><path d="M662 209.700h2" stroke="#7fa0e0" stroke-width="0.800"/><path d="M666 209.700h2" stroke="#c0504d" stroke-width="0.800"/><path d="M670 209.700h2" stroke="#f2cf4a" stroke-width="0.800"/>
<path d="M655 214h25M655 218h25M655 222h25M655 226h25" stroke="#5a5a5a" stroke-width="0.400"/>
<g fill="none" stroke-width="0.900"><rect x="660.500" y="226.500" width="2.300" height="3" stroke="#f0a060"/><rect x="664.700" y="222.500" width="3" height="7" stroke="#7fa0e0"/><rect x="668.700" y="217.300" width="3" height="12.200" stroke="#c0504d"/><rect x="672.800" y="213.900" width="3.200" height="15.600" stroke="#f2cf4a"/></g>
<!-- thumb 2 selected -->
<rect x="684.500" y="203.300" width="32" height="32.700" fill="#fff" stroke="#8a8a8a" stroke-width="1.300"/>
<path d="M690 206.400h21" stroke="#e8c8b0" stroke-width="0.700"/>
<path d="M688 212.500h26M688 216.500h26M688 220.500h26M688 224.500h26" stroke="#eee" stroke-width="0.400"/>
<rect x="691" y="224.700" width="5.200" height="3.600" fill="#f9a870"/><rect x="696.200" y="220.700" width="4.800" height="7.600" fill="#8faadc"/><rect x="701" y="216.200" width="4.600" height="12.100" fill="#c86050"/><rect x="705.600" y="212.300" width="5.700" height="16" fill="#fad766"/>
<path d="M690 228.500h23" stroke="#d8d8d8" stroke-width="0.400"/>
<path d="M692 232.500h18" stroke="#e0d8c8" stroke-width="0.600"/>
<!-- thumb 3 -->
<rect x="718.800" y="204.300" width="31.400" height="31.200" fill="#fff" stroke="#e4e4e4" stroke-width="0.800"/>
<path d="M723 206.400h23" stroke="#9a9a9a" stroke-width="0.800"/>
<path d="M722 212.500h26M722 216.500h26M722 220.500h26M722 224.500h26" stroke="#e6e6e6" stroke-width="0.500"/>
<rect x="725" y="224.700" width="4.400" height="3.600" fill="#f28a3c"/><rect x="729.900" y="220.200" width="4.900" height="8.100" fill="#6a8fd8"/><rect x="735.600" y="215.800" width="4.800" height="12.500" fill="#c0392b"/><rect x="740.900" y="212.300" width="4.900" height="16" fill="#f5c518"/>
<path d="M726 232.500h18" stroke="#d0d0d0" stroke-width="0.600"/>
<rect x="648" y="258.500" width="62" height="13" fill="#fff" stroke="#dcdcdc"/>
<path d="M661 291.500h93" stroke="#888" stroke-width="0.600" stroke-dasharray="1 1"/>
<!-- right icon bar -->
<rect x="775.500" y="176.500" width="26.500" height="19" fill="#7d858c"/>
<g fill="none" stroke="#cfcfcf" stroke-width="0.800">
<rect x="785.500" y="109" width="7" height="7"/><path d="M785.500 111.300h7M785.500 113.700h7M789 109v7"/>
<rect x="785.500" y="157.500" width="7" height="7"/><path d="M786 163l2 -2.500l1.500 1.500l1.500 -2l1.500 2"/>
</g>
<g fill="none" stroke="#555" stroke-width="0.900">
<path d="M785.500 139.700v-6.500h6v4"/><rect x="788.500" y="137.200" width="5" height="3.500" rx="1.700" fill="#f1f1f1"/>
</g>
<g fill="none" stroke="#fff" stroke-width="0.900"><rect x="785.500" y="182.500" width="7" height="7"/><path d="M787.500 188v-1.500M789 188v-3M790.700 188v-4.200" stroke-width="1"/></g>
<text x="786.500" y="213" font-size="7" fill="#cfcfcf" font-family="Liberation Sans, sans-serif">¶</text>
<text x="785" y="237" font-size="7.500" fill="#d4d4d4" font-family="Liberation Sans, sans-serif">Ta</text>
</svg><div class="t" style="left:646.95px;top:142.77px;font-size:7.8px;color:#444;font-weight:bold;transform:scaleX(0.880);">Тип</div><div class="t" style="left:646.95px;top:193.17px;font-size:7.8px;color:#444;font-weight:bold;transform:scaleX(0.896);">Стиль</div><div class="t" style="left:646.95px;top:249.47px;font-size:7.8px;color:#444;font-weight:bold;transform:scaleX(0.883);">Диапазон данных</div><div class="t" style="left:654.65px;top:261.67px;font-size:7.8px;color:#444;transform:scaleX(0.898);">Выбор данных</div><div class="t" style="left:660.85px;top:282.47px;font-size:7.8px;color:#444;transform:scaleX(0.894);">Дополнительные параметры</div><div class="a" style="left:0;top:459px;width:802px;height:17px;background:#f1f1f1;border-top:1px solid #cbcbcb"></div><svg style="left:0;top:459px" width="100" height="17" viewBox="0 459 100 17">
<g fill="#444"><path d="M15.400 465.300v5l-3.600 -2.500z"/><rect x="10" y="465.300" width="1.200" height="5"/>
<path d="M29.300 465.300v5l-4.200 -2.500z"/><path d="M39.200 465.300v5l4.200 -2.500z"/>
<path d="M53 465.300v5l3.600 -2.500z"/><rect x="57" y="465.300" width="1.200" height="5"/></g>
<path d="M70.500 461v14M93.800 461v14" stroke="#d4d4d4"/>
<circle cx="82.200" cy="468.000" r="4.500" fill="none" stroke="#555" stroke-width="0.800"/><path d="M80.900 468.000h2.600M82.200 466.400v2.600" stroke="#555" stroke-width="0.900"/>
</svg><div class="a" style="left:97.8px;top:459px;width:123.7px;height:17px;background:#f6f6f6;border-right:1px solid #dadada;border-top:2px solid #e6c872; overflow:hidden"></div><div class="t" style="left:103.45px;top:463.87px;font-size:7.8px;color:#8a8a8a;transform:scaleX(0.849);">Звонки по менеджерам (телефони)</div><div class="a" style="left:221.5px;top:459px;width:66.5px;height:17px;background:#f6f6f6;border-right:1px solid #dadada;border-top:1px solid #cbcbcb; overflow:hidden"></div><div class="t" style="left:230.25px;top:463.87px;font-size:7.8px;color:#8a8a8a;transform:scaleX(0.885);">Воронка продаж</div><div class="a" style="left:288.0px;top:459px;width:88.3px;height:17px;background:#f6f6f6;border-right:1px solid #dadada;border-top:2px solid #a5d68a; overflow:hidden"></div><div class="t" style="left:294.95px;top:463.87px;font-size:7.8px;color:#8a8a8a;transform:scaleX(0.888);">Сделки по менеджерам</div><div class="a" style="left:376.3px;top:459px;width:96.6px;height:17px;background:#f6f6f6;border-right:1px solid #dadada;border-top:2px solid #a5d68a; overflow:hidden"></div><div class="t" style="left:383.55px;top:463.87px;font-size:7.8px;color:#8a8a8a;transform:scaleX(0.891);">Контакты по менеджерам</div><div class="a" style="left:472.9px;top:459px;width:127.9px;height:17px;background:#fff;border-right:1px solid #dadada;border-top:2px solid #f2cf1f; overflow:hidden"></div><div class="t" style="left:478.85px;top:463.87px;font-size:7.8px;color:#222;transform:scaleX(0.882);">Продажи по менеджерам за неделю</div><div class="a" style="left:600.8px;top:459px;width:85.1px;height:17px;background:#f6f6f6;border-right:1px solid #dadada;border-top:2px solid #a5d68a; overflow:hidden"></div><div class="t" style="left:608.55px;top:463.87px;font-size:7.8px;color:#8a8a8a;transform:scaleX(0.879);">Счета по менеджерам</div><div class="a" style="left:685.9px;top:459px;width:13.1px;height:17px;background:#f6f6f6;border-right:1px solid #dadada;border-top:2px solid #a5d68a; overflow:hidden"></div><div class="t" style="left:691.65px;top:463.87px;font-size:7.8px;color:#8a8a8a;transform:scaleX(0.696);">За</div><div class="a" style="left:700px;top:459px;width:102px;height:17px;background:#f1f1f1;border-top:1px solid #cbcbcb"></div><svg style="left:700px;top:459px" width="102" height="17" viewBox="700 459 102 17">
<g fill="none" stroke="#555" stroke-width="0.800"><circle cx="711.800" cy="467.500" r="4.300"/><path d="M710.300 467.500h3"/><circle cx="779.900" cy="467.500" r="4.300"/><path d="M778.400 467.500h3M779.900 466v3"/></g></svg><div class="t" style="left:720.65px;top:463.87px;font-size:7.8px;color:#444;font-weight:bold;transform:scaleX(0.892);">Масштаб 100%</div><div class="a" style="left:800px;top:0;width:2px;height:476px;background:#fbfbfb"></div><div class="a" style="left:0;top:474.500px;width:802px;height:1.500px;background:#fbfbfb"></div></body></html>
